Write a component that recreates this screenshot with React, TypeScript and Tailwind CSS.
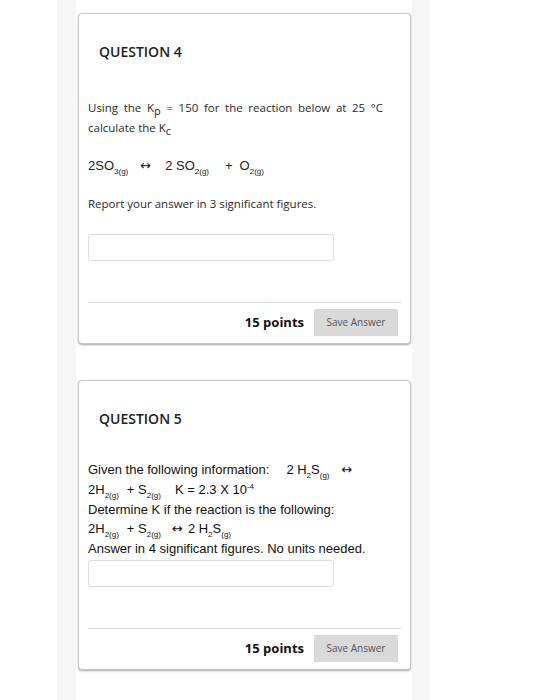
import React from 'react';

const openSans = { fontFamily: '"Open Sans", "Liberation Sans", sans-serif' };
const arial = { fontFamily: '"Liberation Sans", Arial, sans-serif' };

function Sub({ children }: { children: React.ReactNode }) {
  return <sub className="text-[8px] bottom-[-4px]">{children}</sub>;
}

function Arrow({ className = '' }: { className?: string }) {
  return (
    <span className={`text-[13px] leading-none ${className}`} style={{ fontFamily: '"DejaVu Sans", sans-serif' }}>
      ↔
    </span>
  );
}

function CardFooter() {
  return (
    <>
      <div className="h-px bg-[#dcdcdc]" />
      <div className="mt-[6px] flex items-center justify-end gap-[10px] pr-[3px]" style={openSans}>
        <span className="text-[13px] font-bold text-[#111]">15 points</span>
        <button className="h-[27px] w-[84px] bg-[#d9d9d9] text-[10px] text-[#555]">Save Answer</button>
      </div>
    </>
  );
}

function AnswerBox() {
  return <div className="h-[27px] w-[246px] rounded-[3px] border border-[#dedede] bg-white" />;
}

function Title({ children }: { children: React.ReactNode }) {
  return (
    <div className="pl-[11px] text-[14px] font-semibold leading-[20px] text-[#222]" style={openSans}>
      {children}
    </div>
  );
}

export default function App() {
  return (
    <div className="min-h-[700px] bg-white">
      <div className="ml-[57px] w-[373px] bg-[#f6f6f6] pl-[19px] pr-[18px] min-h-[700px]">
        <div className="min-h-[700px] bg-white pl-[2px] pt-[13px]">
          {/* question 4 */}
          <div className="w-[333px] rounded-[4px] border border-[#c6c6c6] bg-white px-[9px] pb-[7px] pt-[28px] shadow-[0_1px_2px_rgba(0,0,0,0.35)]">
            <Title>QUESTION 4</Title>
            <div className="mt-[36px] text-[11.5px] leading-[20px] text-[#2a2a2a]" style={openSans}>
              <div className="w-[295px] text-justify [text-align-last:justify]">
                Using the K<sub className="text-[11px] bottom-[-3px]">p</sub> = 150 for the reaction below at 25 °C
              </div>
              <div>
                calculate the K<sub className="text-[11px] bottom-[-3px]">c</sub>
              </div>
            </div>
            <div className="mt-[18px] text-[13px] leading-[20px] text-[#222]" style={arial}>
              2SO<Sub>3(g)</Sub>
              <Arrow className="ml-[12px]" />
              <span className="ml-[14px]">2 SO</span>
              <Sub>2(g)</Sub>
              <span className="ml-[16px]">+</span>
              <span className="ml-[7px]">O</span>
              <Sub>2(g)</Sub>
            </div>
            <div className="mt-[18px] text-[11.5px] leading-[20px] text-[#2a2a2a]" style={openSans}>
              Report your answer in 3 significant figures.
            </div>
            <div className="mt-[20px]">
              <AnswerBox />
            </div>
            <div className="mt-[41px]">
              <CardFooter />
            </div>
          </div>

          {/* question 5 */}
          <div className="mt-[36px] w-[333px] rounded-[4px] border border-[#c6c6c6] bg-white px-[9px] pb-[7px] pt-[28px] shadow-[0_1px_2px_rgba(0,0,0,0.35)]">
            <Title>QUESTION 5</Title>
            <div className="mt-[31px] text-[13px] leading-[19.75px] text-[#111]" style={arial}>
              <div>
                Given the following information:
                <span className="ml-[17px]">2 H</span>
                <Sub>2</Sub>S<Sub>(g)</Sub>
                <Arrow className="ml-[12px]" />
              </div>
              <div>
                2H<Sub>2(g)</Sub>
                <span className="ml-[8px]">+ S</span>
                <Sub>2(g)</Sub>
                <span className="ml-[14px]">K = 2.3 X 10</span>
                <sup className="text-[8px] top-[-5px]">-4</sup>
              </div>
              <div>Determine K if the reaction is the following:</div>
              <div>
                2H<Sub>2(g)</Sub>
                <span className="ml-[8px]">+ S</span>
                <Sub>2(g)</Sub>
                <Arrow className="ml-[11px]" />
                <span className="ml-[5px]">2 H</span>
                <Sub>2</Sub>S<Sub>(g)</Sub>
              </div>
              <div>Answer in 4 significant figures. No units needed.</div>
            </div>
            <div className="mt-px">
              <AnswerBox />
            </div>
            <div className="mt-[41px]">
              <CardFooter />
            </div>
          </div>
        </div>
      </div>
    </div>
  );
}
